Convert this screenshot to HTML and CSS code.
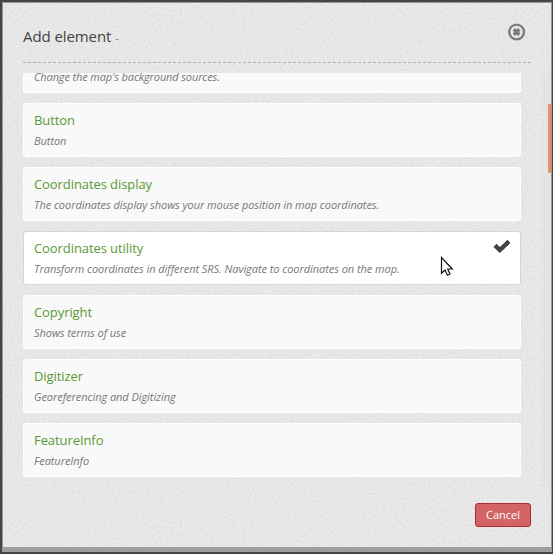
FILE: index.html
```html
<!DOCTYPE html>
<html lang="en">
<head>
<meta charset="utf-8">
<title>Add element</title>
<link rel="stylesheet" href="styles.css">
</head>
<body>
<div class="dialog">
  <svg class="texture" aria-hidden="true">
    <filter id="paper" x="0" y="0" width="100%" height="100%" color-interpolation-filters="sRGB">
      <feTurbulence type="fractalNoise" baseFrequency="0.5" numOctaves="3" seed="4"/>
      <feColorMatrix values="0.09 0.04 0 0 0.839  0.09 0.04 0 0 0.839  0.09 0.04 0 0 0.839  0 0 0 0 1"/>
    </filter>
    <rect width="100%" height="100%" filter="url(#paper)"/>
  </svg>
  <header class="header">
    <h1 class="title">Add element <span class="subtitle">-</span></h1>
    <button class="close" aria-label="Close">
      <svg width="18" height="18" viewBox="0 0 18 18"><circle cx="8.6" cy="9" r="7.4" fill="none" stroke="#7c7c7c" stroke-width="2.4"/><path d="M5.9 6.3l5.4 5.4M11.3 6.3l-5.4 5.4" stroke="#7c7c7c" stroke-width="3.4"/></svg>
    </button>
  </header>
  <div class="viewport">
    <ul class="list">
      <li class="item partial"><p class="description">Change the map's background sources.</p></li>
      <li class="item"><h2 class="name">Button</h2><p class="description">Button</p></li>
      <li class="item"><h2 class="name">Coordinates display</h2><p class="description">The coordinates display shows your mouse position in map coordinates.</p></li>
      <li class="item selected"><h2 class="name">Coordinates utility</h2><p class="description">Transform coordinates in different SRS. Navigate to coordinates on the map.</p>
        <svg class="check" width="18" height="14" viewBox="0 0 18 14"><path d="M2 6.4L6.8 11L16 2.3" fill="none" stroke="#424242" stroke-width="4.4"/></svg>
      </li>
      <li class="item"><h2 class="name">Copyright</h2><p class="description">Shows terms of use</p></li>
      <li class="item"><h2 class="name">Digitizer</h2><p class="description">Georeferencing and Digitizing</p></li>
      <li class="item"><h2 class="name">FeatureInfo</h2><p class="description">FeatureInfo</p></li>
    </ul>
    <div class="track"><div class="thumb"></div></div>
  </div>
  <footer class="footer"><button class="cancel">Cancel</button></footer>
</div>
<svg class="cursor" width="14" height="21" viewBox="0 0 14 21"><path d="M1.5 1.5V17.3L5 14.1L7.4 19.2L10 18L7.7 13H12.3Z" fill="#fff" stroke="#111" stroke-width="1.2"/></svg>
</body>
</html>
```
FILE: styles.css
```css
* { box-sizing: border-box; }
body {
  margin: 0;
  height: 554px;
  padding: 2px 1px 2px 2px;
  overflow: hidden;
  background: #454545;
  font-family: "Open Sans", sans-serif;
}
h1, h2, p, ul { margin: 0; padding: 0; font-weight: 400; }
button { font-family: inherit; }
.dialog {
  position: relative;
  isolation: isolate;
  height: 550px;
  border: 1px solid #999;
  border-bottom: 5px solid #9d9d9d;
  background: #e6e6e6;
}
.texture {
  position: absolute;
  z-index: -1;
  inset: 0;
  width: 100%;
  height: 100%;
}
.header {
  display: flex;
  justify-content: space-between;
  height: 60px;
  margin: 0 20px;
  border-bottom: 1px dashed #b2b2b2;
}
.title {
  padding-top: 22px;
  font-size: 15px;
  line-height: 22px;
  letter-spacing: -0.08px;
  color: #444;
}
.subtitle { font-size: 11px; color: #777; }
.close {
  width: 18px;
  height: 18px;
  margin: 20px 5px 0 0;
  padding: 0;
  border: 0;
  background: none;
}
.close svg { display: block; }
.viewport {
  display: flex;
  justify-content: space-between;
  height: 414px;
  margin-top: 10px;
  padding-left: 20px;
  overflow: hidden;
}
.list {
  display: flex;
  flex-direction: column;
  gap: 10px;
  width: 498px;
  list-style: none;
}
.item {
  position: relative;
  flex: none;
  height: 54px;
  padding: 6px 10px 0;
  border: 1px solid #fff;
  border-radius: 3px;
  background: #f9f9f9;
}
.partial {
  height: 20px;
  padding-top: 0;
  border-top: 0;
  border-radius: 0 0 3px 3px;
}
.selected { border-color: #d6d6d6; background: #fff; }
.name { font-size: 13px; line-height: 20px; letter-spacing: -0.08px; color: #5a9834; }
.description {
  padding-top: 3px;
  font-size: 11px;
  line-height: 16px;
  letter-spacing: -0.055px;
  font-style: italic;
  color: #777;
}
.partial .description { padding-top: 0; margin-top: -4px; letter-spacing: -0.13px; }
.check { position: absolute; top: 7px; right: 9px; }
.track {
  width: 10px;
  padding: 31px 0 0 7px;
  background: #e4e4e4;
}
.thumb { height: 69px; border-radius: 1px; background: #f08b64; }
.footer {
  display: flex;
  justify-content: flex-end;
  padding: 16px 20px 0;
}
.cancel {
  width: 56px;
  height: 24px;
  padding: 0;
  border: 1px solid #a92f31;
  border-radius: 3px;
  background: #d46463;
  font-size: 11px;
  line-height: 22px;
  color: #fff;
}
.cursor { position: absolute; left: 440px; top: 256px; }
```
